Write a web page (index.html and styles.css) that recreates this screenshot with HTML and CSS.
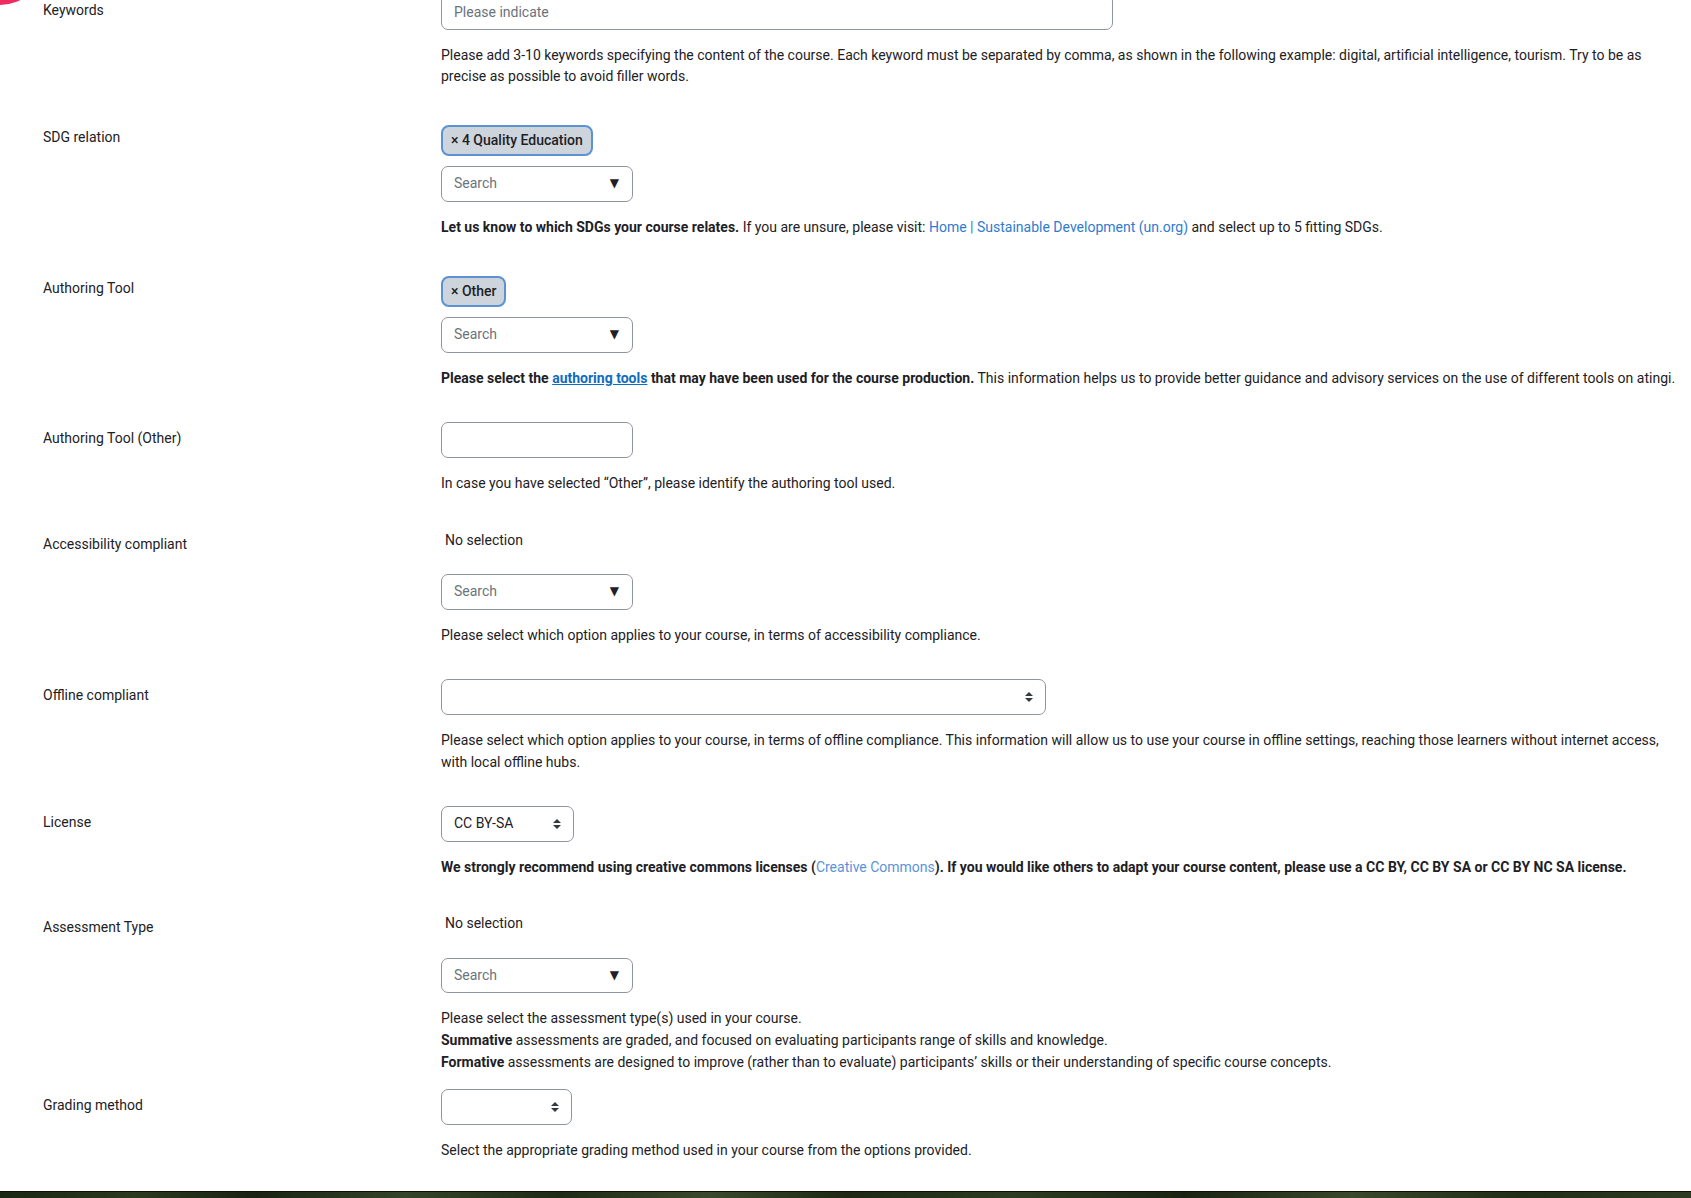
FILE: index.html
```html
<!DOCTYPE html>
<html lang="en">
<head>
  <meta charset="UTF-8">
  <title>Course metadata</title>
  <link rel="stylesheet" href="styles.css">
</head>
<body>

  <div class="fab"></div>

  <form class="mform">

    <div class="fitem">
      <label class="fitem-label">Keywords</label>
      <div class="felement">
        <input class="form-control keywords" type="text" placeholder="Please indicate">
        <div class="help">Please add 3-10 keywords specifying the content of the course. Each keyword must be separated by comma, as shown in the following example: digital, artificial intelligence, tourism. Try to be as precise as possible to avoid filler words.</div>
      </div>
    </div>

    <div class="fitem">
      <label class="fitem-label">SDG relation</label>
      <div class="felement">
        <div class="tags"><span class="tag">× 4 Quality Education</span></div>
        <div class="form-control search"><span>Search</span><span class="caret">▼</span></div>
        <div class="help"><b>Let us know to which SDGs your course relates.</b> If you are unsure, please visit: <a class="ext" href="#">Home | Sustainable Development (un.org)</a> and select up to 5 fitting SDGs.</div>
      </div>
    </div>

    <div class="fitem">
      <label class="fitem-label">Authoring Tool</label>
      <div class="felement">
        <div class="tags"><span class="tag">× Other</span></div>
        <div class="form-control search"><span>Search</span><span class="caret">▼</span></div>
        <div class="help"><b>Please select the <a class="doc" href="#">authoring tools</a> that may have been used for the course production.</b> This information helps us to provide better guidance and advisory services on the use of different tools on atingi.</div>
      </div>
    </div>

    <div class="fitem">
      <label class="fitem-label">Authoring Tool (Other)</label>
      <div class="felement">
        <input class="form-control short" type="text">
        <div class="help">In case you have selected “Other”, please identify the authoring tool used.</div>
      </div>
    </div>

    <div class="fitem">
      <label class="fitem-label">Accessibility compliant</label>
      <div class="felement">
        <div class="no-selection">No selection</div>
        <div class="form-control search"><span>Search</span><span class="caret">▼</span></div>
        <div class="help">Please select which option applies to your course, in terms of accessibility compliance.</div>
      </div>
    </div>

    <div class="fitem">
      <label class="fitem-label">Offline compliant</label>
      <div class="felement">
        <div class="form-control select offline">
          <span></span>
          <svg width="8" height="12" viewBox="0 0 8 12"><path d="M0 5L4 1L8 5Z M0 7L8 7L4 11Z" fill="#343a40"/></svg>
        </div>
        <div class="help">Please select which option applies to your course, in terms of offline compliance. This information will allow us to use your course in offline settings, reaching those learners without internet access, with local offline hubs.</div>
      </div>
    </div>

    <div class="fitem">
      <label class="fitem-label">License</label>
      <div class="felement">
        <div class="form-control select license">
          <span>CC BY-SA</span>
          <svg width="8" height="12" viewBox="0 0 8 12"><path d="M0 5L4 1L8 5Z M0 7L8 7L4 11Z" fill="#343a40"/></svg>
        </div>
        <div class="help"><b>We strongly recommend using creative commons licenses (<a class="ext light" href="#">Creative Commons</a>). If you would like others to adapt your course content, please use a CC BY, CC BY SA or CC BY NC SA license.</b></div>
      </div>
    </div>

    <div class="fitem tight">
      <label class="fitem-label">Assessment Type</label>
      <div class="felement">
        <div class="no-selection">No selection</div>
        <div class="form-control search"><span>Search</span><span class="caret">▼</span></div>
        <div class="help">Please select the assessment type(s) used in your course.<br>
          <b>Summative</b> assessments are graded, and focused on evaluating participants range of skills and knowledge.<br>
          <b>Formative</b> assessments are designed to improve (rather than to evaluate) participants’ skills or their understanding of specific course concepts.</div>
      </div>
    </div>

    <div class="fitem last">
      <label class="fitem-label">Grading method</label>
      <div class="felement">
        <div class="form-control select grading">
          <span></span>
          <svg width="8" height="12" viewBox="0 0 8 12"><path d="M0 5L4 1L8 5Z M0 7L8 7L4 11Z" fill="#343a40"/></svg>
        </div>
        <div class="help">Select the appropriate grading method used in your course from the options provided.</div>
      </div>
    </div>

  </form>

  <div class="footer-band"></div>

</body>
</html>
```

FILE: styles.css
```css
body {
  margin: 0;
  background: #fff;
  color: #1d2125;
  font-family: Roboto, "Liberation Sans", sans-serif;
  font-size: 14px;
  line-height: 21.6px;
  overflow: hidden;
  position: relative;
}
.fab {
  position: absolute;
  left: -45px;
  top: -85px;
  width: 90px;
  height: 90px;
  border-radius: 50%;
  background: #ee2c5f;
}
.mform {
  margin: -6px 0 0 0;
  padding: 0 8px 0 43px;
}
.fitem {
  display: grid;
  grid-template-columns: 398px 1fr;
  margin-bottom: 33px;
}
.fitem.tight {
  margin-bottom: 16px;
}
.fitem.last {
  margin-bottom: 30px;
}
.fitem-label {
  padding-top: 6px;
}
.felement {
  min-width: 0;
}
.help {
  margin-top: 15px;
}
.help b {
  font-weight: 700;
}
a.ext {
  color: #2f7bcf;
  text-decoration: none;
}
a.ext.light {
  color: #5b93d8;
  font-weight: 400;
}
a.doc {
  color: #0f6cbf;
  text-decoration: underline;
}
.form-control {
  display: block;
  box-sizing: border-box;
  height: 35.6px;
  margin: 0;
  border: 1px solid #8f959e;
  border-radius: 7px;
  padding: 6px 12px;
  background: #fff;
  color: #1d2125;
  font: inherit;
  line-height: 21.6px;
}
.form-control::placeholder {
  color: #6a737b;
}
.keywords {
  width: 672px;
}
.short {
  width: 192px;
}
.search {
  width: 192px;
  margin-top: 10px;
  display: flex;
  justify-content: space-between;
  align-items: center;
  color: #6a737b;
}
.caret {
  color: #1d2125;
  font-family: "DejaVu Sans", sans-serif;
  font-size: 12px;
  margin-right: 1px;
}
.tags {
  margin-top: 4px;
  display: flex;
}
.tag {
  display: inline-block;
  border: 2px solid #5a92d3;
  border-radius: 8px;
  background: #ced4dc;
  padding: 3px 8px;
  font-weight: 500;
  line-height: 21.6px;
}
.no-selection {
  padding: 2px 0 0 4px;
}
.no-selection + .search {
  margin-top: 23px;
}
.select {
  display: flex;
  justify-content: space-between;
  align-items: center;
  padding-right: 12px;
}
.offline {
  width: 605px;
}
.license {
  width: 133px;
}
.grading {
  width: 131px;
}
.footer-band {
  height: 40px;
  border-top: 1px solid #0b0f08;
  background: linear-gradient(90deg, #1c2614 0%, #2c3a1f 8%, #1a2213 15%, #34452a 24%, #202b17 33%, #3b4a2c 42%, #1e2815 50%, #2e3d22 60%, #1b2414 70%, #3a482b 80%, #222d18 90%, #2f3c23 100%);
}
```
